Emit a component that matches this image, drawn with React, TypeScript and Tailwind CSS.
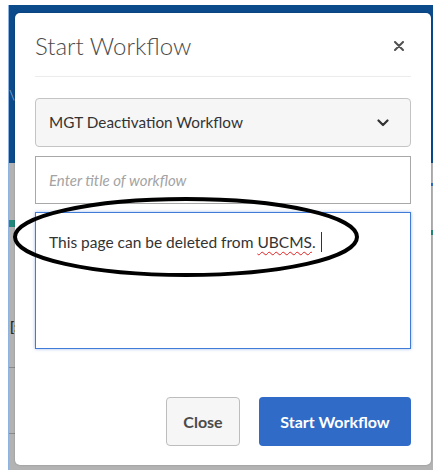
const CloseIcon = () => (
  <svg width="10" height="10" viewBox="0 0 10 10" className="text-[#505050]">
    <path d="M1 1 L9 9 M9 1 L1 9" stroke="currentColor" strokeWidth="2" strokeLinecap="round" />
  </svg>
);

const Chevron = () => (
  <svg width="12" height="8" viewBox="0 0 12 8" className="text-[#323232]">
    <path d="M1.5 1.5 L6 6 L10.5 1.5" fill="none" stroke="currentColor" strokeWidth="2.2" strokeLinecap="round" strokeLinejoin="round" />
  </svg>
);

export default function App() {
  return (
    <div className="relative w-[433px] h-[470px] overflow-hidden bg-white pl-[8px] pt-[5px] font-['Lato',sans-serif]">
      {/* page behind the modal */}
      <div className="relative h-full w-full bg-[#b3b3b3] pl-[7px] pt-[8px] pr-[2px] pb-[5px]">
        <div className="absolute inset-x-0 top-0 h-[158px] bg-[#0b4a8b]" />
        <span className="absolute inset-y-0 left-0 w-px bg-[#8fb3e0]" />
        <span className="absolute left-[1px] top-[84px] text-[13px] text-[#7f9fc4] leading-none">\/</span>
        <span className="absolute left-[1px] top-[215px] h-[7px] w-[6px] bg-[#23877a]" />
        <span className="absolute left-[2px] top-[316px] text-[13px] font-bold text-[#222] leading-none">[:</span>
        <span className="absolute left-[1px] top-[362px] h-px w-[6px] bg-[#8a8a8a]" />
        <span className="absolute left-[1px] top-[428px] h-px w-[6px] bg-[#8a8a8a]" />
        <span className="absolute right-0 top-[178px] h-[3px] w-[2px] bg-[#2d6bc8]" />
        <span className="absolute right-0 top-[225px] h-[5px] w-[2px] bg-[#23877a]" />

        {/* Start Workflow dialog */}
        <div className="relative flex h-full w-full flex-col rounded-[5px] bg-white px-[20px] shadow-[0_0_2px_rgba(0,0,0,0.25)]">
          <div className="flex h-[64px] items-center justify-between border-b border-[#ececec] pt-[2px]">
            <h2 className="text-[24px] font-light text-[#4b4b4b]">Start Workflow</h2>
            <span className="mr-[7px]"><CloseIcon /></span>
          </div>

          <button
            type="button"
            className="mt-[21px] flex h-[49px] w-full items-center justify-between rounded-[4px] border border-[#c4c4c4] bg-[#f6f6f6] pl-[13px] pr-[21px] text-[15.3px] text-[#333]"
          >
            <span>MGT Deactivation Workflow</span>
            <Chevron />
          </button>

          <div className="mt-[9px] flex h-[48px] items-center border border-[#a8a8a8] px-[13px]">
            <span className="text-[15px] italic text-[#a3a3a3]">Enter title of workflow</span>
          </div>

          <div className="mt-[8px] h-[137px] border border-[#3f7bd7] px-[13px] pt-[15px] text-[15.5px] text-[#333] shadow-[0_0_3px_rgba(63,123,215,0.5)]">
            This page can be deleted from{" "}
            <span className="underline decoration-wavy decoration-[#e0201f] decoration-1 underline-offset-[3px]">UBCMS</span>.
            <span className="ml-[5px] inline-block h-[20px] w-px translate-y-[4px] bg-[#333]" />
          </div>

          <div className="mt-[48px] flex justify-end gap-[19px]">
            <button
              type="button"
              className="h-[49px] w-[74px] rounded-[4px] border border-[#bdbdbd] bg-[#f6f6f6] text-[16px] font-bold text-[#4b4b4b]"
            >
              Close
            </button>
            <button
              type="button"
              className="h-[49px] w-[152px] rounded-[4px] bg-[#2f6bc7] text-[16px] font-bold text-white"
            >
              Start Workflow
            </button>
          </div>
        </div>
      </div>

      {/* hand-drawn highlight around the comment */}
      <svg className="pointer-events-none absolute left-0 top-0" width="433" height="470">
        <ellipse cx="186" cy="237" rx="171" ry="38" fill="none" stroke="#000" strokeWidth="4" />
      </svg>
    </div>
  );
}
